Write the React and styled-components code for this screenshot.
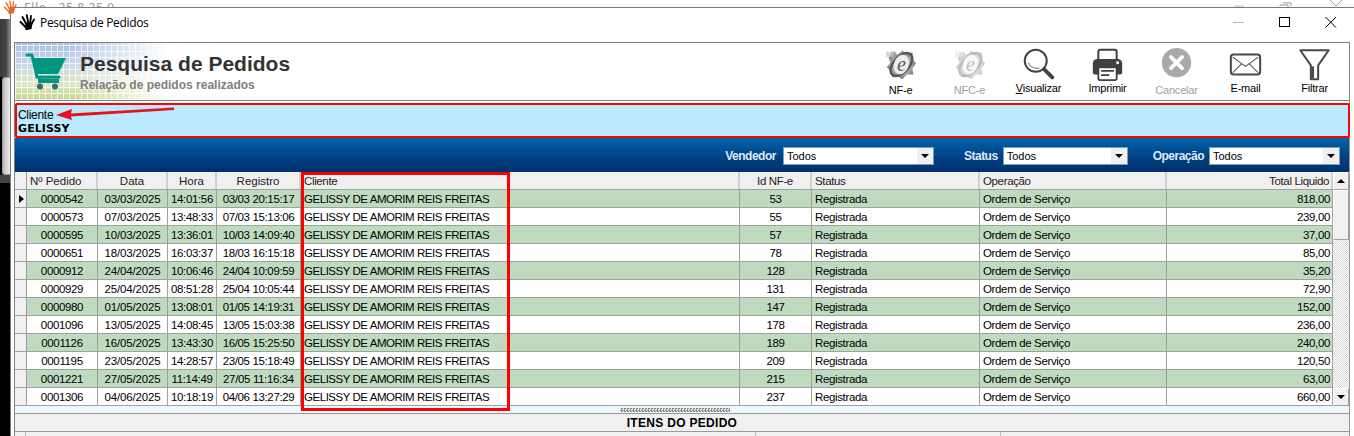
import React from "react";
import styled, { createGlobalStyle } from "styled-components";

const Global = createGlobalStyle`
  html, body { margin: 0; padding: 0; background: #fff; }
  body { font-family: "Liberation Sans", Arial, sans-serif; }
  * { box-sizing: border-box; }
`;

const Page = styled.div`
  position: relative;
  width: 1354px;
  height: 436px;
  overflow: hidden;
  display: flex;
  flex-direction: column;
  background: #fff;
`;
const ParentBar = styled.div`
  height: 7px;
  flex: none;
  display: flex;
  align-items: flex-start;
  overflow: hidden;
  background: #fff;
`;
const ParentTitle = styled.span`
  margin-left: 24px;
  margin-top: -1px;
  font: 12px "Noto Sans", sans-serif;
  letter-spacing: 0.6px;
  color: #9a9a9a;
  width: 1210px;
`;
const ParentGhost = styled.svg`
  flex: none;
  width: 112px;
  height: 7px;
`;
const AppHand = styled.svg`
  position: absolute;
  left: 2px;
  top: 0;
  width: 16px;
  height: 14px;
`;
const Body = styled.div`
  flex: 1;
  display: flex;
  min-height: 0;
`;
const Rail = styled.div`
  flex: none;
  width: 10px;
  display: flex;
  flex-direction: column;
  background: #000;
`;
const RailWhite = styled.div`
  height: 12px;
  background: #fff;
`;
const RailDark = styled.div`
  height: 58px;
  background: linear-gradient(90deg, #3c3c3c, #444 60%, #8a8a8a);
`;
const RailButton = styled.div`
  height: 98px;
  margin-left: 2px;
  background: linear-gradient(90deg, #bcbcbc, #eeeeee);
  border: 1px solid #9a9a9a;
  border-right: none;
  border-radius: 3px 0 0 3px;
`;
const RailTail = styled.div`
  height: 8px;
  background: #444;
`;
const Window = styled.div`
  position: relative;
  flex: 1;
  min-width: 0;
  display: flex;
  flex-direction: column;
  background: #fff;
  border-left: 1px solid #7a7a7a;
  border-top: 1px solid #7a7a7a;
`;
const TitleBar = styled.div`
  height: 34px;
  flex: none;
  display: flex;
  align-items: center;
  padding: 0 0 6px 8px;
  gap: 5px;
`;
const TitleHand = styled.svg`
  width: 16px;
  height: 16px;
  flex: none;
`;
const TitleText = styled.span`
  font: 12px "Open Sans", sans-serif;
  letter-spacing: -0.33px;
  color: #000;
  flex: 1;
`;
const WinControls = styled.div`
  display: flex;
  align-items: center;
`;
const WinBtn = styled.svg`
  width: 46px;
  height: 12px;
  flex: none;
`;
const Content = styled.div`
  flex: 1;
  min-height: 0;
  margin: 0 4px 0 3px;
  display: flex;
  flex-direction: column;
  border-left: 1px solid #808080;
  border-right: 1px solid #9a9a9a;
`;
const Header = styled.div`
  height: 59px;
  flex: none;
  display: flex;
  border-top: 1px solid #808080;
  border-bottom: 1px solid #808080;
  margin-right: -1px;
  border-right: 1px solid #808080;
  background: #fff;
`;
const Brand = styled.div`
  position: relative;
  width: 300px;
  display: flex;
  align-items: flex-start;
  padding: 8px 0 0 9px;
  flex: none;
`;
const BrandPattern = styled.div`
  position: absolute;
  inset: 0 auto 0 0;
  width: 155px;
  background:
    repeating-linear-gradient(90deg, rgba(255,255,255,.75) 0 1px, transparent 1px 6px),
    repeating-linear-gradient(0deg, rgba(255,255,255,.75) 0 1px, transparent 1px 6px),
    linear-gradient(180deg, #a9bfe6 0%, #c6d6ea 35%, #dfe7c8 70%, #c5d58c 100%);
  mask-image: linear-gradient(90deg, #000 0%, #000 35%, rgba(0,0,0,.45) 70%, transparent 100%);
`;
const Cart = styled.svg`
  position: relative;
  width: 42px;
  height: 38px;
  flex: none;
  margin-top: 2px;
`;
const BrandText = styled.div`
  position: relative;
  margin-left: 14px;
  display: flex;
  flex-direction: column;
`;
const BrandTitle = styled.div`
  font: bold 21px/26px "Liberation Sans", Arial, sans-serif;
  letter-spacing: 0;
  color: #333;
  white-space: nowrap;
`;
const BrandSub = styled.div`
  font: bold 12px/14px "Liberation Sans", Arial, sans-serif;
  color: #808080;
  white-space: nowrap;
  margin-top: 1px;
`;
const Tools = styled.div`
  margin-left: auto;
  display: flex;
`;
const Tool = styled.div`
  width: 69px;
  display: flex;
  flex-direction: column;
  align-items: center;
  padding-top: 5px;
`;
const ToolIcon = styled.svg`
  width: 33px;
  height: 33px;
  flex: none;
`;
const ToolLabel = styled.span`
  font: 11px/13px "Liberation Sans", Arial, sans-serif;
  letter-spacing: -0.2px;
  margin-top: ${(p) => (p.$low ? "3px" : "1px")};
  color: ${(p) => (p.$off ? "#a0a0a0" : "#000")};
  white-space: nowrap;
`;
const ClientPanel = styled.div`
  position: relative;
  height: 35px;
  flex: none;
  margin-top: 2px;
  margin-right: -1px;
  background: #bbe9ff;
  border: 2px solid #f00;
  border-radius: 2px;
  padding: 3px 0 0 1px;
`;
const ClientLabel = styled.div`
  font: 12px/14px "Liberation Sans", Arial, sans-serif;
  letter-spacing: -0.3px;
  color: #000;
`;
const ClientValue = styled.div`
  font: bold 11px/13px "DejaVu Sans", sans-serif;
  letter-spacing: 0.1px;
  color: #000;
`;
const Arrow = styled.svg`
  position: absolute;
  left: 38px;
  top: 1px;
  width: 120px;
  height: 14px;
`;
const FilterBar = styled.div`
  height: 34px;
  flex: none;
  display: flex;
  align-items: center;
  justify-content: flex-end;
  padding: 1px 9px 0 0;
  background: linear-gradient(180deg, #0063ab 0%, #003f82 60%, #002f6c 100%);
`;
const FilterLabel = styled.span`
  font: bold 12px/14px "Liberation Sans", Arial, sans-serif;
  letter-spacing: -0.5px;
  color: #dceaf6;
  margin-left: ${(p) => p.$gap}px;
  margin-right: ${(p) => p.$after}px;
`;
const Select = styled.div`
  width: ${(p) => p.$w}px;
  height: 18px;
  background: #fff;
  border: 1px solid #7f9db9;
  display: flex;
  align-items: center;
  justify-content: space-between;
  padding-left: 3px;
  font: 11px "Liberation Sans", Arial, sans-serif;
  color: #000;
`;
const SelectButton = styled.div`
  width: 16px;
  align-self: stretch;
  background: #f0f0f0;
  display: flex;
  align-items: center;
  justify-content: center;
  &::after {
    content: "";
    border-left: 4px solid transparent;
    border-right: 4px solid transparent;
    border-top: 4px solid #000;
  }
`;
const GridWrap = styled.div`
  position: relative;
  flex: none;
  display: flex;
  height: 234px;
  background: #fff;
`;
const Table = styled.div`
  width: 1318px;
  flex: none;
  display: flex;
  flex-direction: column;
`;
const COLS = "12px 71px 70px 49px 84px 439px 72px 168px 187px 166px";
const HeadRow = styled.div`
  display: grid;
  grid-template-columns: ${COLS};
  height: 18px;
  background: #f0f0f0;
  border-bottom: 1px solid #a0a0a0;
`;
const BodyRow = styled.div`
  display: grid;
  grid-template-columns: ${COLS};
  height: 18px;
  background: ${(p) => (p.$alt ? "#bedbbf" : "#fff")};
  border-bottom: 1px solid #a0a0a0;
`;
const Cell = styled.div`
  font: 11.5px/18px "Liberation Sans", Arial, sans-serif;
  letter-spacing: ${(p) => p.$ls ?? -0.36}px;
  color: #000;
  white-space: nowrap;
  overflow: hidden;
  text-align: ${(p) => p.$align || "left"};
  padding: ${(p) => (p.$align === "right" ? "0 2px 0 0" : p.$align === "center" ? "0" : "0 0 0 3px")};
  border-right: 1px solid #a0a0a0;
`;
const HeadCell = styled(Cell)`
  line-height: 19px;
  color: #222;
  border-right: 2px solid #d0d0d0;
`;
const Indicator = styled.div`
  background: #f0f0f0;
  border-right: 1px solid #a0a0a0;
  display: flex;
  align-items: center;
  justify-content: center;
`;
const Pointer = styled.div`
  border-top: 4px solid transparent;
  border-bottom: 4px solid transparent;
  border-left: 5px solid #000;
  margin-left: 1px;
`;
const Scrollbar = styled.div`
  flex: 1;
  display: flex;
  flex-direction: column;
  background: #f0f0f0;
`;
const ScrollButton = styled.div`
  height: 18px;
  flex: none;
  background: #f0f0f0;
  border: 1px solid;
  border-color: #fff #a0a0a0 #a0a0a0 #fff;
  display: flex;
  align-items: center;
  justify-content: center;
  &::after {
    content: "";
    border-left: 4px solid transparent;
    border-right: 4px solid transparent;
    ${(p) => (p.$up ? "border-bottom: 4px solid #000;" : "border-top: 4px solid #000;")}
  }
`;
const ScrollThumb = styled.div`
  height: 50px;
  flex: none;
  background: #f0f0f0;
  border: 1px solid;
  border-color: #fff #a0a0a0 #a0a0a0 #fff;
`;
const ScrollTrack = styled.div`
  flex: 1;
  background: repeating-conic-gradient(#d8d8d8 0 25%, #fff 0 50%) 0 0 / 2px 2px;
`;
const RedBox = styled.div`
  position: absolute;
  left: 286px;
  top: 0;
  width: 209px;
  height: 239px;
  border: 3px solid #f00;
  pointer-events: none;
`;
const SplitStrip = styled.div`
  height: 8px;
  flex: none;
  background: #ecf9ff;
  border-bottom: 1px solid #9a9a9a;
  display: flex;
  justify-content: center;
  padding-top: 2px;
`;
const SplitDots = styled.div`
  width: 110px;
  height: 4px;
  margin-left: -14px;
  background: repeating-conic-gradient(#8a8a8a 0 25%, #e8e8e8 0 50%) 0 0 / 3px 3px;
`;
const Section = styled.div`
  height: 18px;
  flex: none;
  background: #f0f0f0;
  border-bottom: 1px solid #9a9a9a;
  text-align: center;
  font: bold 12px/18px "Liberation Sans", Arial, sans-serif;
  letter-spacing: 0.3px;
  color: #000;
`;
const SubGrid = styled.div`
  flex: 1;
  display: grid;
  grid-template-columns: 11px 730px 245px 1fr;
  background: #f0f0f0;
`;
const SubCol = styled.div`
  border-right: 1px solid #c0c0c0;
`;

const HandPath = ({ color, w = 1.9 }) => (
  <g stroke={color} strokeLinecap="round" fill="none">
    <path d="M6.5 13 L1.5 8" strokeWidth={w} />
    <path d="M7.5 10.5 L3.5 3" strokeWidth={w} />
    <path d="M9.5 10 L7.8 1.2" strokeWidth={w} />
    <path d="M11 10 L12 2" strokeWidth={w} />
    <path d="M12 11 L15 5.5" strokeWidth={w} />
    <path d="M7.5 15 L11.5 14 L12 10 L8 10 Z" strokeWidth="2.4" fill={color} />
  </g>
);

const NfeIcon = ({ off }) => (
  <ToolIcon viewBox="0 0 36 36" style={off ? { opacity: 0.4 } : undefined}>
    <defs>
      <radialGradient id={off ? "nfb" : "nfa"} cx="50%" cy="50%" r="55%">
        <stop offset="0" stopColor="#ececec" />
        <stop offset="0.55" stopColor="#b0b0b0" />
        <stop offset="1" stopColor="#6d6d6d" />
      </radialGradient>
    </defs>
    <path
      d="M5 10 L9 4 L15 7 L20 3 L25 6 L31 5 L31 12 L35 17 L31 22 L32 29 L25 29 L20 34 L15 31 L9 32 L8 26 L3 21 L7 16 Z"
      fill={`url(#${off ? "nfb" : "nfa"})`}
    />
    <ellipse cx="19" cy="18" rx="15" ry="8.5" transform="rotate(-48 19 18)" fill="none" stroke="#565656" strokeWidth="2.6" />
    <ellipse cx="19" cy="18" rx="8" ry="11" transform="rotate(20 19 18)" fill="#ededed" />
    <text x="19" y="25" textAnchor="middle" fontFamily="'Liberation Serif', serif" fontStyle="italic" fontSize="22" fill="#5a5a5a">e</text>
    <text x="2" y="10" fontFamily="'Liberation Sans', sans-serif" fontWeight="bold" fontStyle="italic" fontSize="8" fill="#fff" stroke="#8a8a8a" strokeWidth="0.3">NF</text>
  </ToolIcon>
);

const SearchIcon = () => (
  <ToolIcon viewBox="0 0 36 36">
    <circle cx="15" cy="14" r="12" fill="#fff" stroke="#444" strokeWidth="2.2" />
    <path d="M7 16 C9 21 14 23 19 22" fill="none" stroke="#8a8a8a" strokeWidth="1.4" />
    <path d="M24 23 L33 32" stroke="#444" strokeWidth="4.2" strokeLinecap="round" />
  </ToolIcon>
);
const PrinterIcon = () => (
  <ToolIcon viewBox="0 0 36 36">
    <path d="M8 13 V4 a2 2 0 0 1 2-2 H26 a2 2 0 0 1 2 2 V13" fill="none" stroke="#404040" strokeWidth="2.2" />
    <path d="M2 17 a5 5 0 0 1 5-5 H29 a5 5 0 0 1 5 5 V27 a2 2 0 0 1-2 2 H4 a2 2 0 0 1-2-2 Z" fill="#404040" />
    <circle cx="29" cy="16" r="1.6" fill="#fff" />
    <path d="M8 21 H28 V33 a2 2 0 0 1-2 2 H10 a2 2 0 0 1-2-2 Z" fill="#fff" stroke="#404040" strokeWidth="2" />
    <path d="M11 25 H25 M11 29.5 H20" stroke="#404040" strokeWidth="2" />
  </ToolIcon>
);
const CancelIcon = () => (
  <ToolIcon viewBox="0 0 36 36">
    <circle cx="18" cy="16" r="16" fill="#a9a9a9" />
    <path d="M12 10 L24 22 M24 10 L12 22" stroke="#fff" strokeWidth="4.2" strokeLinecap="round" />
  </ToolIcon>
);
const MailIcon = () => (
  <ToolIcon viewBox="0 0 36 36">
    <rect x="2" y="7" width="32" height="22" rx="3" fill="#fff" stroke="#4a4a4a" strokeWidth="2.2" />
    <path d="M4 10 L18 20 L32 10 M4 27 L14 17 M32 27 L22 17" fill="none" stroke="#4a4a4a" strokeWidth="1.1" />
  </ToolIcon>
);
const FunnelIcon = () => (
  <ToolIcon viewBox="0 0 36 36">
    <path d="M2.5 2.5 H33.5 L22 19 V34 H14 V19 Z" fill="#fff" stroke="#4a4a4a" strokeWidth="2.2" strokeLinejoin="round" />
    <path d="M16 20 V33" stroke="#4a4a4a" strokeWidth="3" />
  </ToolIcon>
);

const cols = [
  { t: "Nº Pedido", ls: 0 },
  { t: "Data", a: "center", ls: 0 },
  { t: "Hora", a: "center", ls: 0 },
  { t: "Registro", a: "center", ls: 0 },
  { t: "Cliente" },
  { t: "Id NF-e", a: "center" },
  { t: "Status" },
  { t: "Operação" },
  { t: "Total Liquido", a: "right" },
];

const rows = [
  ["0000542", "03/03/2025", "14:01:56", "03/03 20:15:17", "53", "818,00"],
  ["0000573", "07/03/2025", "13:48:33", "07/03 15:13:06", "55", "239,00"],
  ["0000595", "10/03/2025", "13:36:01", "10/03 14:09:40", "57", "37,00"],
  ["0000651", "18/03/2025", "16:03:37", "18/03 16:15:18", "78", "85,00"],
  ["0000912", "24/04/2025", "10:06:46", "24/04 10:09:59", "128", "35,20"],
  ["0000929", "25/04/2025", "08:51:28", "25/04 10:05:44", "131", "72,90"],
  ["0000980", "01/05/2025", "13:08:01", "01/05 14:19:31", "147", "152,00"],
  ["0001096", "13/05/2025", "14:08:45", "13/05 15:03:38", "178", "236,00"],
  ["0001126", "16/05/2025", "13:43:30", "16/05 15:25:50", "189", "240,00"],
  ["0001195", "23/05/2025", "14:28:57", "23/05 15:18:49", "209", "120,50"],
  ["0001221", "27/05/2025", "11:14:49", "27/05 11:16:34", "215", "63,00"],
  ["0001306", "04/06/2025", "10:18:19", "04/06 13:27:29", "237", "660,00"],
];

export default function App() {
  return (
    <Page>
      <Global />
      <ParentBar>
        <ParentTitle>Ello - 25.8.25.0</ParentTitle>
        <ParentGhost viewBox="0 0 112 7">
          <path d="M0 6 H10" stroke="#bbb" />
          <path d="M49 3 H57 V6 M46 6 V5 H54 V7" fill="none" stroke="#999" />
          <path d="M96 0 L102 6 L108 0" fill="none" stroke="#999" />
        </ParentGhost>
      </ParentBar>
      <Body>
        <Rail>
          <RailWhite />
          <RailDark />
          <RailButton />
          <RailTail />
        </Rail>
        <Window>
          <TitleBar>
            <TitleHand viewBox="0 0 16 16">
              <HandPath color="#000" />
            </TitleHand>
            <TitleText>Pesquisa de Pedidos</TitleText>
            <WinControls>
              <WinBtn viewBox="0 0 46 12">
                <path d="M17 6.5 H28" stroke="#b8b8b8" />
              </WinBtn>
              <WinBtn viewBox="0 0 46 12">
                <rect x="17.5" y="1.5" width="10" height="9" fill="none" stroke="#000" />
              </WinBtn>
              <WinBtn viewBox="0 0 46 12">
                <path d="M17.5 1 L28 11.5 M28 1 L17.5 11.5" stroke="#000" />
              </WinBtn>
            </WinControls>
          </TitleBar>
          <Content>
            <Header>
              <Brand>
                <BrandPattern />
                <Cart viewBox="0 0 42 38">
                  <path d="M3 2 H8 L13 24 H35" fill="none" stroke="#009682" strokeWidth="3" strokeLinecap="round" />
                  <path d="M9 5 H42 L34 21 H13 Z" fill="#009682" />
                  <path d="M14 23 V30 H35 V25.5 H17 V23 Z" fill="#009682" />
                  <circle cx="16" cy="33.5" r="3" fill="#3e6a66" />
                  <circle cx="31" cy="33.5" r="3" fill="#3e6a66" />
                </Cart>
                <BrandText>
                  <BrandTitle>Pesquisa de Pedidos</BrandTitle>
                  <BrandSub>Relação de pedidos realizados</BrandSub>
                </BrandText>
              </Brand>
              <Tools>
                <Tool><NfeIcon /><ToolLabel $low>NF-e</ToolLabel></Tool>
                <Tool><NfeIcon off /><ToolLabel $low $off>NFC-e</ToolLabel></Tool>
                <Tool><SearchIcon /><ToolLabel><u>V</u>isualizar</ToolLabel></Tool>
                <Tool><PrinterIcon /><ToolLabel>Imprimir</ToolLabel></Tool>
                <Tool><CancelIcon /><ToolLabel $low $off>Cancelar</ToolLabel></Tool>
                <Tool><MailIcon /><ToolLabel>E-mail</ToolLabel></Tool>
                <Tool><FunnelIcon /><ToolLabel>Filtrar</ToolLabel></Tool>
              </Tools>
            </Header>
            <ClientPanel>
              <ClientLabel>Cliente</ClientLabel>
              <ClientValue>GELISSY</ClientValue>
              <Arrow viewBox="0 0 120 14">
                <path d="M1 9 L17 3 L16 7.5 L119 1.5 L119 4 L16 10.5 L17 14 Z" fill="#e8101c" />
              </Arrow>
            </ClientPanel>
            <FilterBar>
              <FilterLabel $gap={0} $after={7}>Vendedor</FilterLabel>
              <Select $w={151}>Todos<SelectButton /></Select>
              <FilterLabel $gap={30} $after={5}>Status</FilterLabel>
              <Select $w={125}>Todos<SelectButton /></Select>
              <FilterLabel $gap={25} $after={5}>Operação</FilterLabel>
              <Select $w={131}>Todos<SelectButton /></Select>
            </FilterBar>
            <GridWrap>
              <Table>
                <HeadRow>
                  <Indicator />
                  {cols.map((c) => (
                    <HeadCell key={c.t} $align={c.a} $ls={c.ls}>{c.t}</HeadCell>
                  ))}
                </HeadRow>
                {rows.map((r, i) => (
                  <BodyRow key={r[0]} $alt={i % 2 === 0}>
                    <Indicator>{i === 0 && <Pointer />}</Indicator>
                    <Cell $align="center">{r[0]}</Cell>
                    <Cell $align="center" $ls={-0.15}>{r[1]}</Cell>
                    <Cell $align="center">{r[2]}</Cell>
                    <Cell $align="center">{r[3]}</Cell>
                    <Cell $ls={-0.46}>GELISSY DE AMORIM REIS FREITAS</Cell>
                    <Cell $align="center">{r[4]}</Cell>
                    <Cell>Registrada</Cell>
                    <Cell>Ordem de Serviço</Cell>
                    <Cell $align="right">{r[5]}</Cell>
                  </BodyRow>
                ))}
              </Table>
              <Scrollbar>
                <ScrollButton $up />
                <ScrollThumb />
                <ScrollTrack />
                <ScrollButton />
              </Scrollbar>
              <RedBox />
            </GridWrap>
            <SplitStrip><SplitDots /></SplitStrip>
            <Section>ITENS DO PEDIDO</Section>
            <SubGrid>
              <SubCol />
              <SubCol />
              <SubCol />
              <div />
            </SubGrid>
          </Content>
        </Window>
      </Body>
      <AppHand viewBox="0 0 16 16">
        <HandPath color="#f0641e" w={1.5} />
      </AppHand>
    </Page>
  );
}
